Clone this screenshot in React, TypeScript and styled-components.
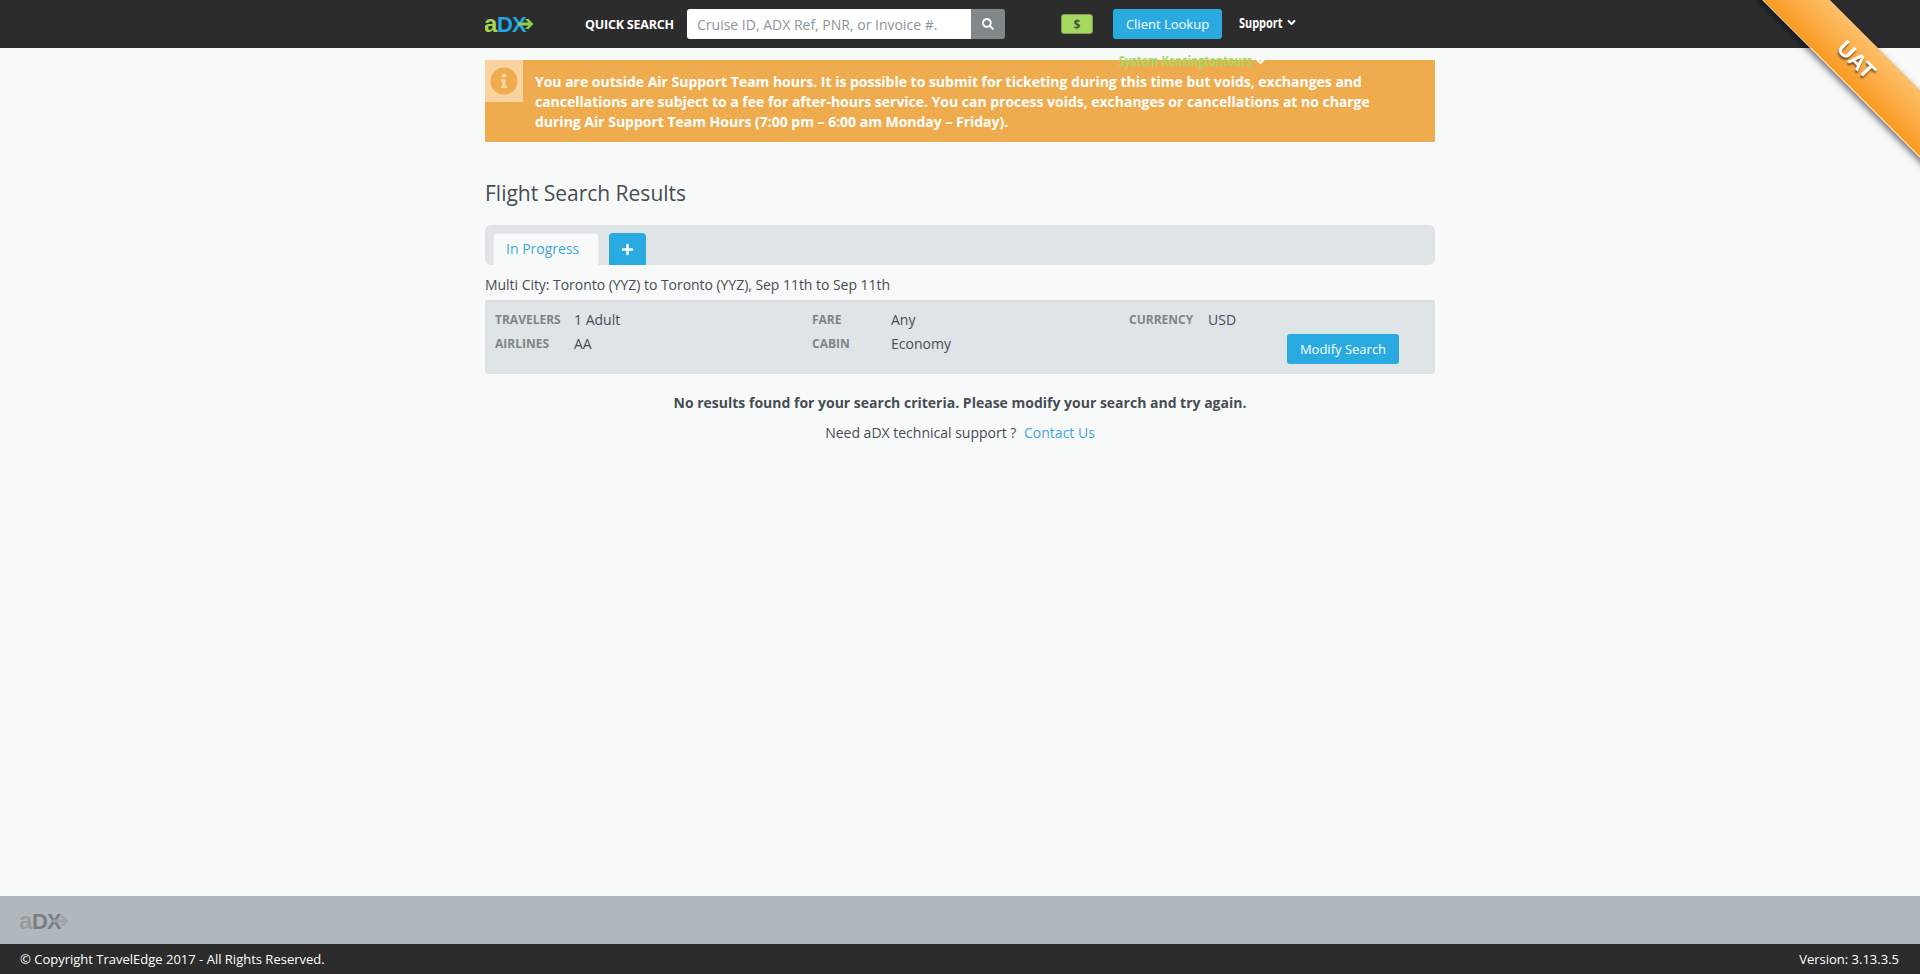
import React from "react";
import styled, { createGlobalStyle } from "styled-components";
import { FaAngleDown, FaInfoCircle, FaPlus, FaSearch } from "react-icons/fa";

const Global = createGlobalStyle`
  html, body { margin: 0; padding: 0; height: 100%; }
  body { background: #f8faf9; color: #474c55; font-family: "Open Sans", "Liberation Sans", sans-serif; font-size: 14px; }
  * { box-sizing: border-box; }
`;

const Page = styled.div`
  height: 974px;
  display: flex;
  flex-direction: column;
  position: relative;
  overflow: hidden;
`;

const Header = styled.header`
  height: 48px;
  flex: none;
  background: #2c2c2c;
`;

const HeaderInner = styled.div`
  width: 950px;
  height: 48px;
  margin: 0 auto;
  display: flex;
  align-items: center;
  position: relative;
`;

const LogoSlot = styled.a`
  width: 100px;
  display: flex;
  align-items: center;
`;

const QuickLabel = styled.label`
  width: 102px;
  font-size: 12.5px;
  font-weight: 700;
  color: #fff;
  white-space: nowrap;
  letter-spacing: -0.2px;
`;

const SearchGroup = styled.form`
  width: 318px;
  height: 30px;
  display: flex;
  border-radius: 3px;
  overflow: hidden;
`;

const SearchInput = styled.input`
  flex: 1;
  min-width: 0;
  border: 0;
  outline: 0;
  background: #fff;
  padding: 0 10px;
  font: 14px "Open Sans", sans-serif;
  &::placeholder { color: #8d959b; opacity: 1; }
`;

const SearchButton = styled.button`
  width: 34px;
  border: 0;
  background: #808789;
  color: #fff;
  display: flex;
  align-items: center;
  justify-content: center;
  font-size: 12px;
  padding: 0;
`;

const MoneyBadge = styled.span`
  width: 32px;
  height: 20px;
  margin-left: 56px;
  background: #a5d85f;
  border: 1px solid #7f9a5c;
  border-radius: 3px;
  color: #4a5a40;
  font-size: 12px;
  font-weight: 700;
  display: flex;
  align-items: center;
  justify-content: center;
`;

const PrimaryButton = styled.button`
  background: #29abe2;
  color: #fff;
  border: 0;
  border-radius: 3px;
  font: 13px "Open Sans", sans-serif;
  padding: 0;
`;

const LookupButton = styled(PrimaryButton)`
  width: 109px;
  height: 30px;
  margin-left: 20px;
`;

const NavMenu = styled.span<{ $color: string; $textWidth: number }>`
  display: inline-flex;
  align-items: center;
  gap: 3px;
  color: ${(p) => p.$color};
  font-weight: 700;
  font-size: 14px;
  white-space: nowrap;
  & > span {
    display: inline-block;
    width: ${(p) => p.$textWidth}px;
    transform: scaleX(0.78);
    transform-origin: left center;
  }
  & svg { color: #fff; font-size: 13px; }
`;

const SupportSlot = styled.div`
  margin-left: 17px;
  margin-top: -3px;
`;

const UserSlot = styled.div`
  position: absolute;
  z-index: 2;
  left: 634px;
  top: 52px;
  line-height: 18px;
`;

const Ribbon = styled.div`
  position: absolute;
  top: 0;
  right: 0;
  width: 200px;
  height: 200px;
  overflow: hidden;
  pointer-events: none;
  z-index: 5;
`;

const RibbonBand = styled.div`
  position: absolute;
  width: 300px;
  height: 48px;
  left: -14px;
  top: 36px;
  transform: rotate(45deg);
  background: linear-gradient(to top, #fa9a22, #fdc16c);
  box-shadow: 0 3px 6px rgba(0, 0, 0, 0.55);
  border-bottom: 1px solid #fbd9a6;
  color: #fff;
  text-align: center;
  line-height: 48px;
  font-family: "Liberation Sans", sans-serif;
  font-weight: 700;
  font-size: 22px;
  text-shadow: 1px 2px 2px rgba(0, 0, 0, 0.55);
`;

const Main = styled.main`
  flex: 1;
  width: 950px;
  margin: 0 auto;
  padding-top: 12px;
`;

const Alert = styled.div`
  height: 82px;
  background: #efac4e;
  display: flex;
  align-items: flex-start;
`;

const AlertIcon = styled.div`
  width: 38px;
  height: 42px;
  flex: none;
  background: #fbd3a2;
  color: #efac4e;
  font-size: 28px;
  display: flex;
  align-items: center;
  justify-content: center;
`;

const AlertText = styled.p`
  margin: 12px 0 0 12px;
  width: 880px;
  color: #fff;
  font-weight: 700;
  font-size: 14px;
  line-height: 20px;
  letter-spacing: -0.015px;
`;

const Title = styled.h1`
  margin: 36px 0 0;
  font-size: 21px;
  font-weight: 400;
  line-height: 30px;
  color: #474c55;
`;

const TabBar = styled.div`
  margin-top: 17px;
  height: 40px;
  background: #dfe4e6;
  border-radius: 6px;
  padding: 8px 0 0 8px;
  display: flex;
  align-items: flex-end;
  gap: 10px;
`;

const Tab = styled.a`
  width: 106px;
  height: 32px;
  background: #f8faf9;
  border: 1px solid #e8ecec;
  border-bottom: 0;
  border-radius: 4px 4px 0 0;
  color: #3fa7de;
  font-size: 14px;
  line-height: 30px;
  padding-left: 12px;
`;

const AddTab = styled.button`
  width: 37px;
  height: 32px;
  border: 0;
  padding: 0;
  background: #29abe2;
  color: #fff;
  border-radius: 4px 4px 0 0;
  font-size: 13px;
  display: flex;
  align-items: center;
  justify-content: center;
`;

const Summary = styled.div`
  margin-top: 10px;
  line-height: 20px;
  font-size: 14px;
  letter-spacing: -0.04px;
`;

const Criteria = styled.div`
  margin-top: 5px;
  height: 74px;
  background: #dfe4e6;
  border-radius: 3px;
  box-shadow: inset 0 2px 0 #d9dddf;
  padding: 8px 10px 0;
  display: grid;
  grid-template-columns: repeat(3, 317px);
  grid-auto-rows: 24px;
`;

const Field = styled.div`
  display: grid;
  grid-template-columns: 79px 1fr;
  align-items: center;
  line-height: 24px;
`;

const FieldLabel = styled.span`
  font-size: 12px;
  font-weight: 700;
  color: #7e8589;
  text-transform: uppercase;
`;

const FieldValue = styled.span`
  font-size: 14px;
`;

const ModifyCell = styled.div`
  padding: 2px 0 0 158px;
`;

const ModifyButton = styled(PrimaryButton)`
  width: 112px;
  height: 30px;
`;

const NoResults = styled.p`
  margin: 19px 0 0;
  text-align: center;
  font-weight: 700;
  font-size: 14px;
  line-height: 20px;
`;

const SupportLine = styled.p`
  margin: 10px 0 0;
  text-align: center;
  font-size: 14px;
  line-height: 20px;
`;

const ContactLink = styled.a`
  color: #3fa7de;
  margin-left: 4px;
`;

const FooterBand = styled.div`
  height: 48px;
  flex: none;
  background: #b0b7bd;
  padding: 12px 0 0 20px;
`;

const FooterBar = styled.footer`
  height: 30px;
  flex: none;
  background: #2c2c2c;
  color: #fff;
  font-size: 13px;
  padding: 0 21px 0 20px;
  display: flex;
  align-items: center;
  justify-content: space-between;
`;

function Logo({ a, dx, arrow }: { a: string; dx: string; arrow: string }) {
  return (
    <svg width="56" height="26" viewBox="0 0 56 26" aria-label="aDX">
      <text x="-1" y="21" fontFamily="Liberation Sans, sans-serif" fontWeight="700" fontSize="24" fill={a}>a</text>
      <text x="12" y="21" fontFamily="Liberation Sans, sans-serif" fontWeight="700" fontSize="22" letterSpacing="-1" fill={dx}>DX</text>
      <path d="M33 11.5h10.5l-3.5-3.5h3.4l5 5-5 5H40l3.5-3.5H33z" fill={arrow} />
    </svg>
  );
}

export default function App() {
  return (
    <Page>
      <Global />
      <Header>
        <HeaderInner>
          <LogoSlot>
            <Logo a="#a5d64f" dx="#1ea8e4" arrow="#8fd14f" />
          </LogoSlot>
          <QuickLabel>QUICK SEARCH</QuickLabel>
          <SearchGroup>
            <SearchInput placeholder="Cruise ID, ADX Ref, PNR, or Invoice #." />
            <SearchButton type="button"><FaSearch /></SearchButton>
          </SearchGroup>
          <MoneyBadge>$</MoneyBadge>
          <LookupButton>Client Lookup</LookupButton>
          <SupportSlot>
            <NavMenu $color="#fff" $textWidth={43}><span>Support</span> <FaAngleDown /></NavMenu>
          </SupportSlot>
          <UserSlot>
            <NavMenu $color="#a5d85f" $textWidth={132}><span>System Kensingtontours</span> <FaAngleDown /></NavMenu>
          </UserSlot>
        </HeaderInner>
      </Header>
      <Ribbon><RibbonBand>UAT</RibbonBand></Ribbon>
      <Main>
        <Alert>
          <AlertIcon><FaInfoCircle /></AlertIcon>
          <AlertText>
            You are outside Air Support Team hours. It is possible to submit for ticketing during this time but voids, exchanges and cancellations are subject to a fee for after-hours service. You can process voids, exchanges or cancellations at no charge during Air Support Team Hours (7:00 pm – 6:00 am Monday – Friday).
          </AlertText>
        </Alert>
        <Title>Flight Search Results</Title>
        <TabBar>
          <Tab>In Progress</Tab>
          <AddTab><FaPlus /></AddTab>
        </TabBar>
        <Summary>Multi City: Toronto (YYZ) to Toronto (YYZ), Sep 11th to Sep 11th</Summary>
        <Criteria>
          <Field><FieldLabel>Travelers</FieldLabel><FieldValue>1 Adult</FieldValue></Field>
          <Field><FieldLabel>Fare</FieldLabel><FieldValue>Any</FieldValue></Field>
          <Field><FieldLabel>Currency</FieldLabel><FieldValue>USD</FieldValue></Field>
          <Field><FieldLabel>Airlines</FieldLabel><FieldValue>AA</FieldValue></Field>
          <Field><FieldLabel>Cabin</FieldLabel><FieldValue>Economy</FieldValue></Field>
          <ModifyCell><ModifyButton>Modify Search</ModifyButton></ModifyCell>
        </Criteria>
        <NoResults>No results found for your search criteria. Please modify your search and try again.</NoResults>
        <SupportLine>Need aDX technical support ? <ContactLink>Contact Us</ContactLink></SupportLine>
      </Main>
      <FooterBand>
        <Logo a="#9a9c9e" dx="#7b7d80" arrow="#a0a2a4" />
      </FooterBand>
      <FooterBar>
        <span>© Copyright TravelEdge 2017 - All Rights Reserved.</span>
        <span>Version: 3.13.3.5</span>
      </FooterBar>
    </Page>
  );
}
